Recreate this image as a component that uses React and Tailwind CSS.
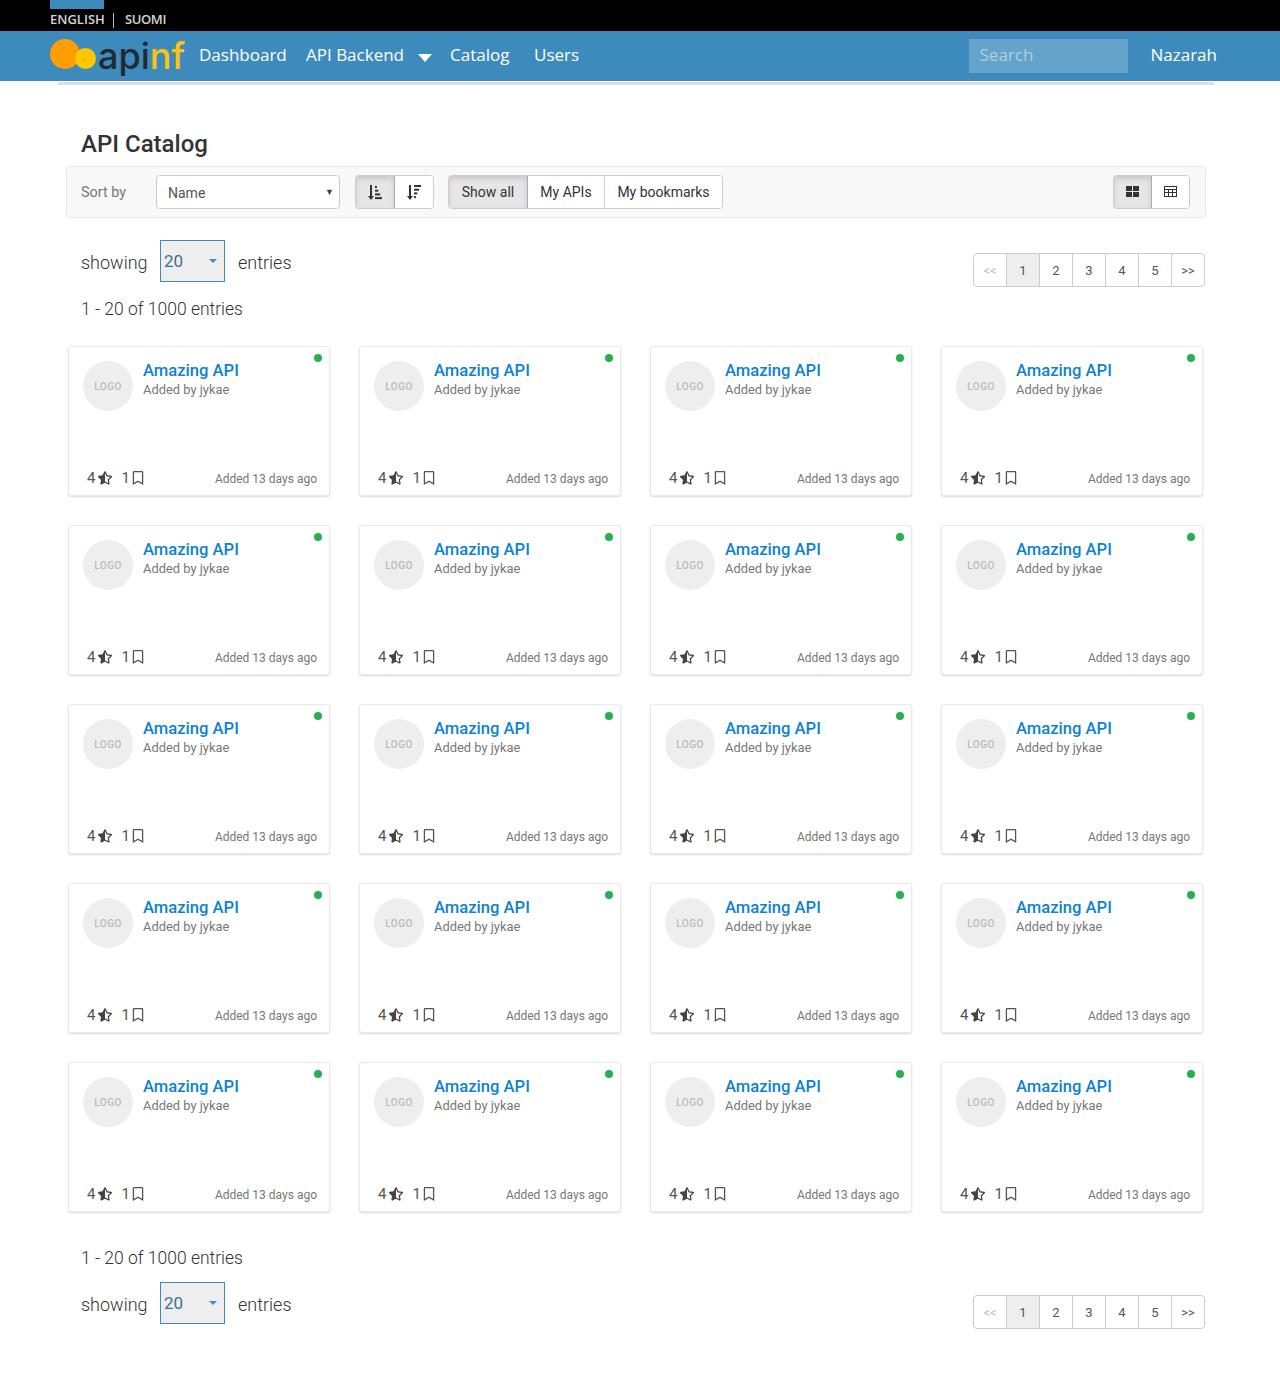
import React from 'react'
import { FaStarHalfAlt, FaRegBookmark } from 'react-icons/fa'

const bodyFont = "font-['Roboto',sans-serif]"
const navFont = "font-['Open_Sans',sans-serif]"

function SortIcon({ flip }) {
  const bars = flip ? [11, 8, 5, 3] : [3, 5, 8, 11]
  return (
    <svg width="14" height="15" viewBox="0 0 14 15" fill="#333">
      <rect x="2" y="0" width="2" height="12" />
      <path d="M0 11h6l-3 4z" />
      {bars.map((w, i) => (
        <rect key={i} x="7" y={i * 3.7 + (flip ? 0 : 1)} width={w * 0.65} height="2" />
      ))}
    </svg>
  )
}

function GridIcon() {
  return (
    <svg className="mt-[-1px]" width="13" height="11" viewBox="0 0 13 11" fill="#333">
      <rect x="0" y="0" width="6" height="5" />
      <rect x="7" y="0" width="6" height="5" />
      <rect x="0" y="6" width="6" height="5" />
      <rect x="7" y="6" width="6" height="5" />
    </svg>
  )
}

function TableIcon() {
  return (
    <svg className="mt-[-1px]" width="13" height="11" viewBox="0 0 13 11" fill="none" stroke="#333" strokeWidth="1">
      <rect x="0.5" y="0.5" width="12" height="10" />
      <path d="M0 3.5h13M0 6.5h13M4.5 3v8M8.5 3v8" />
    </svg>
  )
}

function Logo() {
  return (
    <div className="flex items-center w-[149px] h-[50px]">
      <div className="w-[30px] h-[30px] rounded-full bg-[#ff9e00] mt-[-5px]" />
      <div className="w-[21px] h-[21px] rounded-full bg-[#ffc600] ml-[-5px] mt-[4px]" />
      <div className="font-['Inter',sans-serif] text-[36px] leading-none ml-[2px] mt-[-1px]">
        <span className="text-[#222933]">api</span>
        <span className="text-[#ffc20e]">nf</span>
      </div>
    </div>
  )
}

function TopBar() {
  return (
    <div className="h-[31px] bg-black pl-[50px]">
      <div className="w-[54px] h-[9px] bg-[#3d8bbc]" />
      <div className={`flex items-center h-[22px] text-[13px] font-semibold text-[#d5d5d5] ${navFont}`}>
        <span className="w-[54px] whitespace-nowrap">ENGLISH</span>
        <span className="w-px h-[15px] bg-[#bbb] ml-[9px] mr-[11px]" />
        <span className="tracking-[-0.4px]">SUOMI</span>
      </div>
    </div>
  )
}

function NavBar() {
  return (
    <div className={`h-[50px] bg-[#3d8bbc] flex items-center pl-[50px] text-white text-[17px] font-medium ${navFont}`}>
      <Logo />
      <a className="w-[107px] mb-[2px]">Dashboard</a>
      <a className="whitespace-nowrap mb-[2px]">API Backend</a>
      <span className="ml-[14px] mr-[18px] mt-[3px] w-0 h-0 border-x-[7px] border-x-transparent border-t-[8px] border-t-white" />
      <a className="w-[84px] mb-[2px]">Catalog</a>
      <a className="mb-[2px]">Users</a>
      <div className="ml-auto w-[159px] h-[34px] bg-[#64a4cb] flex items-center pl-[11px] pb-[2px] text-[#b4ccda] font-normal">Search</div>
      <a className="ml-[23px] mr-[63px] mb-[2px]">Nazarah</a>
    </div>
  )
}

function SegButton({ active, children, className }) {
  return (
    <div
      className={`flex items-center justify-center h-full border-r border-[#ccc] last:border-r-0 ${
        active ? 'bg-[#e6e6e6] shadow-[inset_0_3px_5px_rgba(0,0,0,0.125)] border-r-[#adadad]' : 'bg-white'
      } ${className}`}
    >
      {children}
    </div>
  )
}

function Toolbar() {
  return (
    <div className="ml-[66px] w-[1140px] h-[52px] mt-[7px] bg-[#f8f8f8] border border-[#e7e7e7] rounded flex items-center text-sm text-[#333]">
      <span className="ml-[14px] mt-[2px] w-[75px] text-[#777] text-[14.4px]">Sort by</span>
      <div className="w-[184px] h-[34px] bg-white border border-[#ccc] rounded flex items-center justify-between pl-[11px] pr-[5px] text-[#555]">
        <span className="mt-[1px]">Name</span>
        <span className="text-[9px] text-[#444]">▼</span>
      </div>
      <div className="ml-[15px] w-[79px] h-[34px] flex border border-[#ccc] rounded overflow-hidden">
        <SegButton active className="w-[39px]"><SortIcon /></SegButton>
        <SegButton className="w-[39px]"><SortIcon flip /></SegButton>
      </div>
      <div className="ml-[14px] h-[34px] flex border border-[#ccc] rounded overflow-hidden">
        <SegButton active className="w-[79px]">Show all</SegButton>
        <SegButton className="w-[77px]">My APIs</SegButton>
        <SegButton className="w-[117px]">My bookmarks</SegButton>
      </div>
      <div className="ml-auto mr-[15px] w-[77px] h-[34px] flex border border-[#ccc] rounded overflow-hidden">
        <SegButton active className="w-[38px]"><GridIcon /></SegButton>
        <SegButton className="w-[38px]"><TableIcon /></SegButton>
      </div>
    </div>
  )
}

function Pagination() {
  const items = ['<<', '1', '2', '3', '4', '5', '>>']
  return (
    <div className="ml-auto mt-[13px] flex h-[34px] border border-[#ccc] rounded text-[13px] text-[#555]">
      {items.map((item, i) => (
        <div
          key={i}
          className={`w-[33px] last:w-[32px] pt-[1px] flex items-center justify-center border-r border-[#ccc] last:border-r-0 ${
            item === '1' ? 'bg-[#eee]' : ''
          } ${item === '<<' ? 'text-[#bbb]' : ''}`}
        >
          {item}
        </div>
      ))}
    </div>
  )
}

function ShowingRow({ className }) {
  return (
    <div className={`flex items-start ml-[81px] mr-[75px] ${className}`}>
      <div className="flex items-center">
        <span className="text-[18px] mt-[2px] font-light text-[#333] w-[79px]">showing</span>
        <div className="w-[65px] h-[42px] bg-[#eee] border border-[#3d8bbc] flex items-center justify-between pl-[3px] pr-[7px]">
          <span className="text-[17px] mt-[2px] text-[#3d6f97]">20</span>
          <span className="w-0 h-0 border-x-[4px] border-x-transparent border-t-[4px] border-t-[#428bca]" />
        </div>
        <span className="text-[18px] mt-[2px] font-light text-[#333] ml-[13px]">entries</span>
      </div>
      <Pagination />
    </div>
  )
}

function ApiCard() {
  return (
    <div className="relative h-[150px] bg-white border border-[#eaeaea] rounded-[3px] shadow-[0_1px_2px_rgba(0,0,0,0.15)] flex flex-col">
      <span className="absolute top-[7px] right-[7px] w-2 h-2 rounded-full bg-[#28b04e]" />
      <div className="flex mt-[14px] ml-[14px]">
        <div className="w-[50px] h-[50px] rounded-full bg-[#eee] flex items-center justify-center text-[10px] font-medium tracking-[0.5px] text-[#bbb]">
          LOGO
        </div>
        <div className="ml-[10px]">
          <div className="text-[16.6px] leading-[20px] font-medium text-[#0d82d0]">Amazing API</div>
          <div className="text-[12.9px] leading-[17px] text-[#777]">Added by jykae</div>
        </div>
      </div>
      <div className="mt-auto mb-[6px] ml-[18px] mr-[12px] flex items-center text-[#555]">
        <span className="text-[15px]">4</span>
        <FaStarHalfAlt className="ml-[3px] text-[14px] text-[#444]" />
        <span className="text-[15px] ml-[9px]">1</span>
        <FaRegBookmark className="ml-[1px] text-[14px]" />
        <span className="ml-auto mt-[2px] text-[12px] text-[#777]">Added 13 days ago</span>
      </div>
    </div>
  )
}

function EntryCount({ className }) {
  return <div className={`ml-[81px] text-[17.5px] leading-[27px] font-light text-[#333] ${className}`}>1 - 20 of 1000 entries</div>
}

export default function App() {
  const cards = Array.from({ length: 20 })
  return (
    <div className={`w-[1280px] h-[1392px] bg-white ${bodyFont}`}>
      <TopBar />
      <NavBar />
      <div className="ml-[58px] w-[1156px] h-[3px] mt-px bg-[#ddd]" />
      <h1 className="ml-[81px] mt-[44px] text-[24px] leading-[30px] font-medium text-[#333]">API Catalog</h1>
      <Toolbar />
      <ShowingRow className="mt-[22px]" />
      <EntryCount className="mt-[9px]" />
      <div className="ml-[68px] w-[1135px] mt-[23px] grid grid-cols-4 gap-x-[29px] gap-y-[29px]">
        {cards.map((_, i) => (
          <ApiCard key={i} />
        ))}
      </div>
      <EntryCount className="mt-[33px]" />
      <ShowingRow className="mt-[10px]" />
    </div>
  )
}
